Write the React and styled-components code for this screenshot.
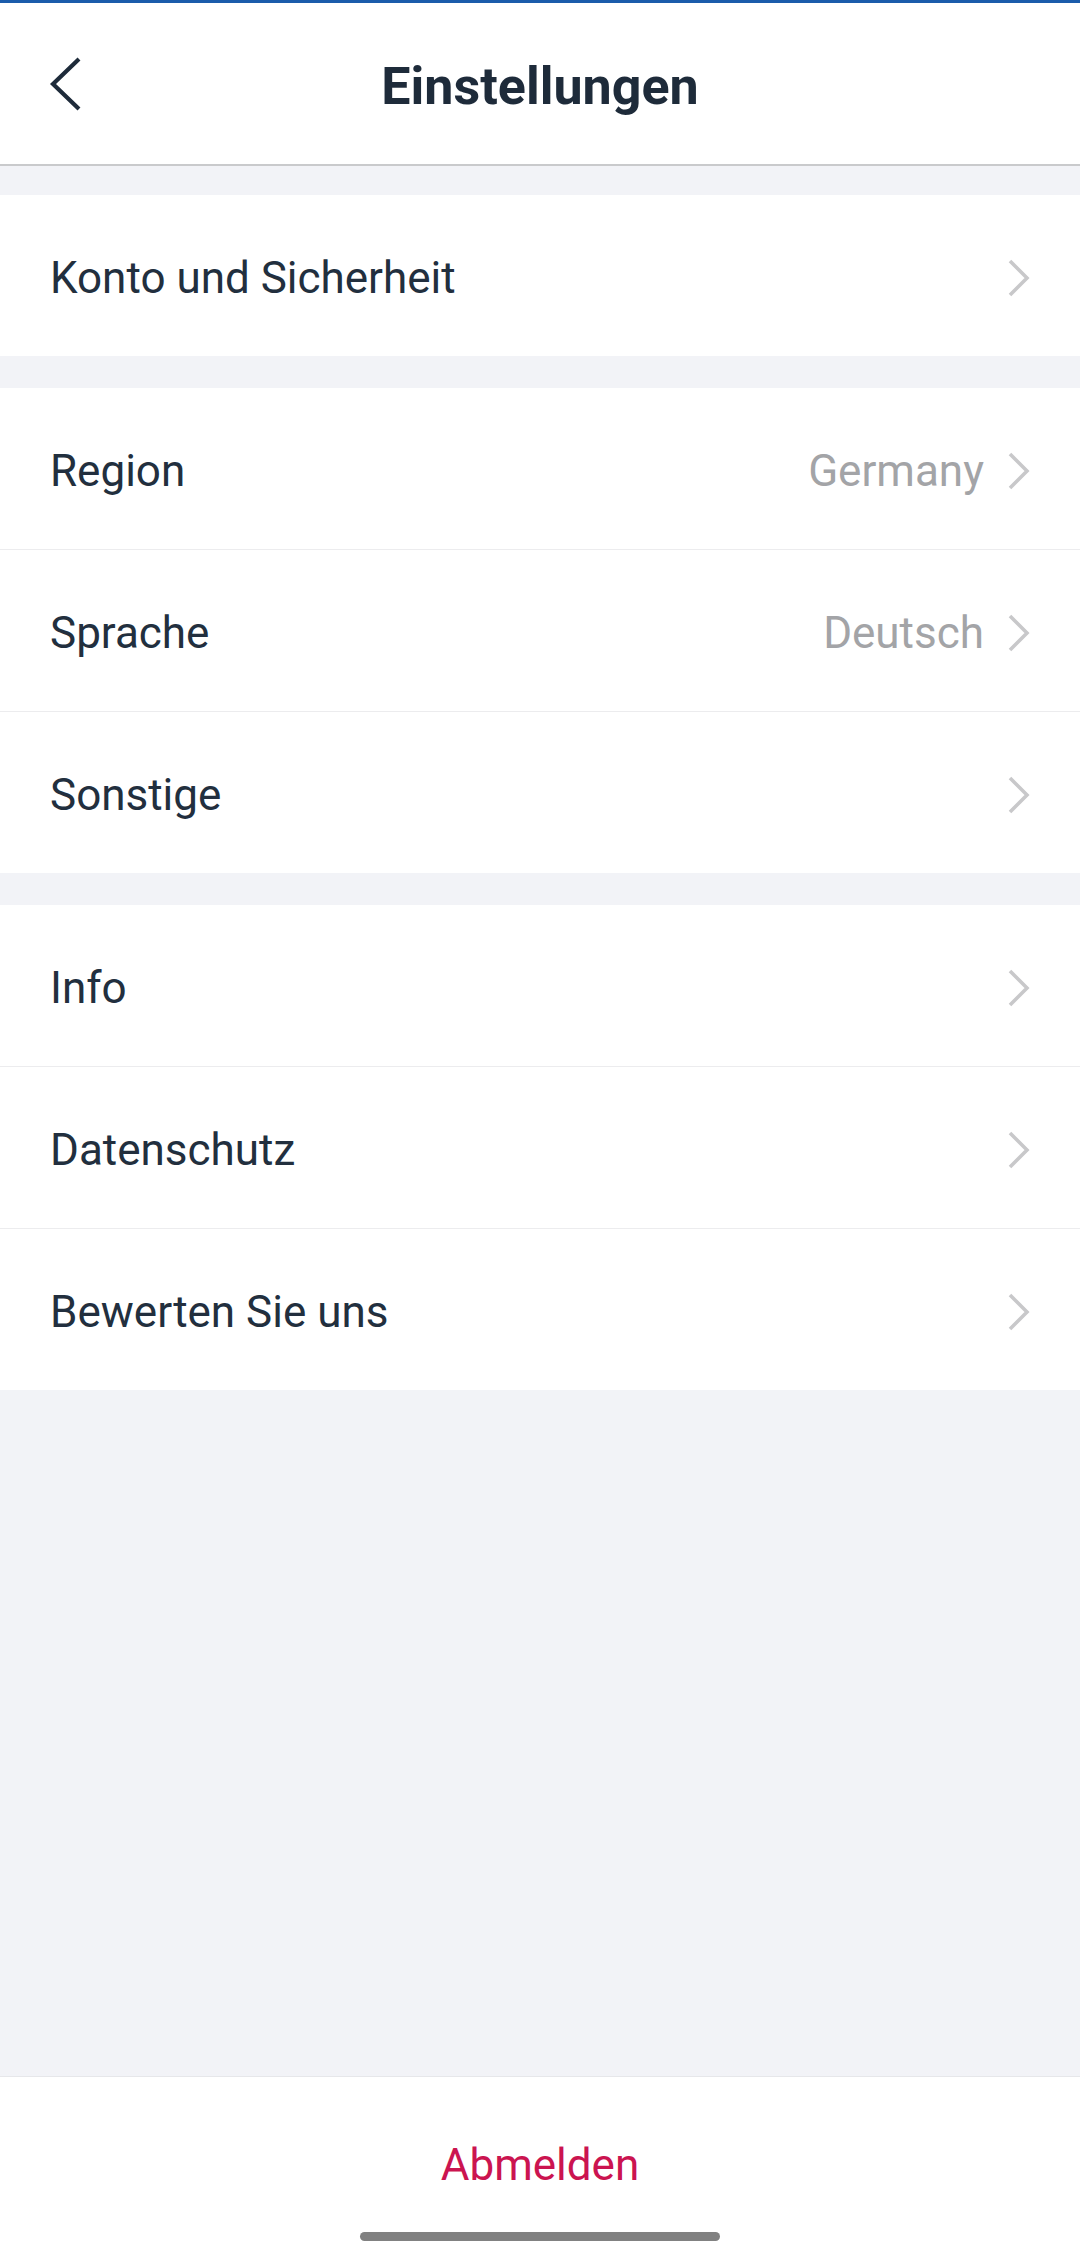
import React from "react";
import styled, { createGlobalStyle } from "styled-components";

const GlobalStyle = createGlobalStyle`
  html, body {
    margin: 0;
    padding: 0;
    background: #f2f3f7;
  }
  body {
    font-family: Roboto, "Noto Sans", "Liberation Sans", sans-serif;
    -webkit-font-smoothing: antialiased;
  }
`;

const groups = [
  [{ label: "Konto und Sicherheit" }],
  [
    { label: "Region", value: "Germany" },
    { label: "Sprache", value: "Deutsch" },
    { label: "Sonstige" },
  ],
  [{ label: "Info" }, { label: "Datenschutz" }, { label: "Bewerten Sie uns" }],
];

const Page = styled.div`
  position: relative;
  display: flex;
  flex-direction: column;
  min-height: 100vh;
  background: #f2f3f7;
  color: #222f3e;
`;

const StatusLine = styled.div`
  height: 3px;
  background: #1b5cab;
`;

const Header = styled.header`
  display: flex;
  align-items: center;
  position: relative;
  height: 161px;
  background: #fff;
  border-bottom: 2px solid #c9cacc;
`;

const BackButton = styled.button`
  display: flex;
  align-items: center;
  border: none;
  background: none;
  padding: 0 0 0 48px;
  height: 100%;
  cursor: pointer;
`;

const Title = styled.h1`
  position: absolute;
  left: 0;
  right: 0;
  margin: 0;
  padding-top: 5px;
  text-align: center;
  font-size: 52px;
  font-weight: 700;
  color: #1e2b3a;
  pointer-events: none;
`;

const Group = styled.section`
  margin-top: ${(p) => p.gap}px;
  background: #fff;
`;

const Row = styled.div`
  box-sizing: border-box;
  display: flex;
  align-items: center;
  height: ${(p) => (p.first ? 161 : 162)}px;
  padding: 4px 50px 0;
  border-top: ${(p) => (p.first ? "none" : "1px solid #ececee")};
  font-size: 44px;
`;

const Label = styled.span`
  flex: 1;
  color: #222f3e;
`;

const Value = styled.span`
  color: #a3a4a7;
  margin-right: 24px;
`;

const Filler = styled.div`
  flex: 1;
`;

const Footer = styled.footer`
  display: flex;
  align-items: center;
  justify-content: center;
  height: 163px;
  padding-top: 6px;
  background: #fff;
  border-top: 1px solid #e6e7ea;
`;

const Logout = styled.button`
  border: none;
  background: none;
  font-family: inherit;
  font-size: 44px;
  color: #cb1450;
  cursor: pointer;
`;

const HomeIndicator = styled.div`
  position: absolute;
  left: 360px;
  bottom: 5px;
  width: 360px;
  height: 9px;
  border-radius: 5px;
  background: #818181;
`;

const BackIcon = () => (
  <svg width="34" height="56" viewBox="0 0 34 56">
    <polyline
      points="31,3 5,28 31,53"
      fill="none"
      stroke="#1e2b3a"
      strokeWidth="4.2"
      strokeLinejoin="miter"
    />
  </svg>
);

const Chevron = () => (
  <svg width="22" height="38" viewBox="0 0 22 38">
    <polyline
      points="2,2 19,19 2,36"
      fill="none"
      stroke="#c8c8ca"
      strokeWidth="3.6"
    />
  </svg>
);

export default function App() {
  return (
    <>
      <GlobalStyle />
      <Page>
        <StatusLine />
        <Header>
          <BackButton aria-label="Zurück">
            <BackIcon />
          </BackButton>
          <Title>Einstellungen</Title>
        </Header>
        {groups.map((items, gi) => (
          <Group key={gi} gap={gi === 0 ? 29 : 32}>
            {items.map((item, i) => (
              <Row key={item.label} first={i === 0}>
                <Label>{item.label}</Label>
                {item.value && <Value>{item.value}</Value>}
                <Chevron />
              </Row>
            ))}
          </Group>
        ))}
        <Filler />
        <Footer>
          <Logout>Abmelden</Logout>
        </Footer>
        <HomeIndicator />
      </Page>
    </>
  );
}
